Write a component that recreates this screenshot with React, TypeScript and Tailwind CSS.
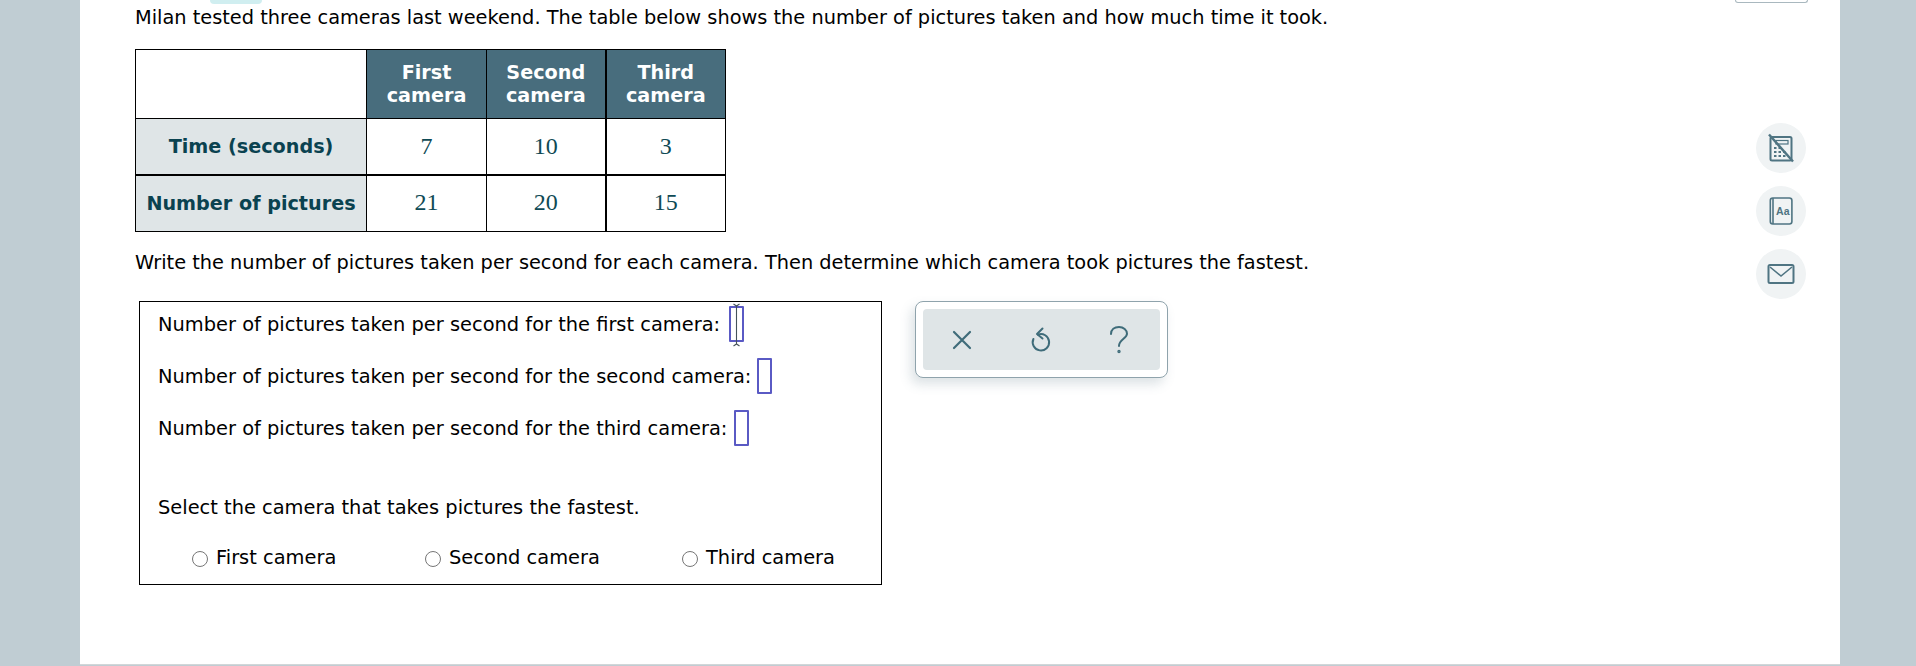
import React from "react";

const rows = [
  { label: "Time (seconds)", values: ["7", "10", "3"] },
  { label: "Number of pictures", values: ["21", "20", "15"] },
];

const answers = [
  { text: "Number of pictures taken per second for the first camera:", active: true, gap: "ml-[9px]" },
  { text: "Number of pictures taken per second for the second camera:", active: false, gap: "ml-[6px]" },
  { text: "Number of pictures taken per second for the third camera:", active: false, gap: "ml-[7px]" },
];

const choices = [
  { label: "First camera", cls: "w-[233px]" },
  { label: "Second camera", cls: "w-[257px]" },
  { label: "Third camera", cls: "" },
];

function CalculatorIcon() {
  return (
    <svg width="26" height="30" viewBox="0 0 26 30" fill="none" stroke="#4f7482">
      <rect x="2.5" y="4" width="21" height="23.5" rx="1.5" strokeWidth="2" />
      <rect x="8" y="7.5" width="12" height="3.5" strokeWidth="1.2" />
      <path d="M1 1.5 L25 28.5" strokeWidth="2.4" />
      <path d="M6 15h2.5M10.5 15h2.5M6 19h2.5M10.5 19h2.5M15 19h2.5M6 23h2.5M10.5 23h2.5M15 23h2.5" strokeWidth="2.2" />
    </svg>
  );
}

function GlossaryIcon() {
  return (
    <svg width="26" height="30" viewBox="0 0 26 30" fill="none" stroke="#4f7482" strokeWidth="1.6">
      <rect x="2.3" y="2" width="21.6" height="26" rx="2.5" />
      <path d="M5 2v26" />
      <text x="14.8" y="18.5" textAnchor="middle" fontSize="10.5" fontWeight="700" fill="#4f7482" stroke="none" fontFamily="'Liberation Sans', sans-serif">Aa</text>
    </svg>
  );
}

function MailIcon() {
  return (
    <svg width="28" height="22" viewBox="0 0 28 22" fill="none" stroke="#4f7482" strokeWidth="2">
      <rect x="1.5" y="2" width="25" height="18" rx="1.5" />
      <path d="M3 4 L14 13 L25 4" strokeWidth="1.6" />
    </svg>
  );
}

function SideButton({ children }: { children: React.ReactNode }) {
  return (
    <button className="flex h-[50px] w-[50px] items-center justify-center rounded-full bg-[#f0f3f4]">
      {children}
    </button>
  );
}

function AnswerInput({ active, gap }: { active: boolean; gap: string }) {
  return (
    <span className={`relative inline-block h-[36px] w-[15px] rounded-[1px] border-2 border-[#5a5ac4] ${gap}`}>
      {active && (
        <svg className="absolute -left-[2px] -top-[5px]" width="15" height="44" viewBox="0 0 15 44" fill="none" stroke="#45525a">
          <path d="M4.5 1 L7.5 3 L10.5 1 M7.5 3 V41 M4.5 43 L7.5 41 L10.5 43" strokeWidth="1.1" />
        </svg>
      )}
    </span>
  );
}

export default function App() {
  return (
    <div className="h-[666px] overflow-hidden bg-[#c0cdd3] pl-[80px] pr-[76px] font-['DejaVu_Sans',sans-serif] text-[19.35px] text-black">
      <div className="flex h-[665px] border-b border-[#d2d6d8] bg-white">
        <div className="w-[1655px] pl-[55px]">
          {/* clipped tab sitting above the scrolled question */}
          <div className="ml-[75px] h-[4px] w-[52px] rounded-b-[10px] bg-[#d0eef0]" />
          <p className="mt-[3px] h-[22px] whitespace-nowrap leading-[22px]">
            Milan tested three cameras last weekend. The table below shows the number of pictures taken and how much time it took.
          </p>

          <table className="mt-[20px] table-fixed border-collapse border border-black text-[19.2px] leading-[23px]">
            <thead>
              <tr className="h-[69px]">
                <th className="w-[231px] border border-black bg-white" />
                <th className="w-[120px] border border-black bg-[#486d7d] font-bold text-white">First<br />camera</th>
                <th className="w-[119px] border border-black border-r-2 bg-[#486d7d] font-bold text-white">Second<br />camera</th>
                <th className="w-[120px] border border-black bg-[#486d7d] font-bold text-white">Third<br />camera</th>
              </tr>
            </thead>
            <tbody>
              {rows.map((row, i) => (
                <tr key={row.label} className={i === 0 ? "h-[56px] border-b-2 border-black" : "h-[57px]"}>
                  <th className="whitespace-nowrap border border-black bg-[#dfe5e7] text-center font-bold text-[#0a4250]">{row.label}</th>
                  {row.values.map((value, j) => (
                    <td
                      key={j}
                      className={`border border-black text-center font-['Liberation_Serif',serif] text-[24px] text-[#0f4a55] ${j === 1 ? "border-r-2" : ""} ${i === 1 ? "pb-[2px]" : ""}`}
                    >
                      {value}
                    </td>
                  ))}
                </tr>
              ))}
            </tbody>
          </table>

          <p className="mt-[20px] h-[22px] whitespace-nowrap leading-[22px]">
            Write the number of pictures taken per second for each camera. Then determine which camera took pictures the fastest.
          </p>

          <div className="mt-[27px] flex items-start">
            <div className="ml-[4px] h-[284px] w-[743px] border border-black pl-[18px] text-[19.42px]">
              <div className="flex flex-col gap-[16px] pt-[4px]">
                {answers.map((a) => (
                  <div key={a.text} className="flex h-[36px] items-center">
                    <span className="whitespace-nowrap pt-[2px]">{a.text}</span>
                    <AnswerInput active={a.active} gap={a.gap} />
                  </div>
                ))}
              </div>
              <p className="mt-[51px] h-[22px] leading-[22px]">Select the camera that takes pictures the fastest.</p>
              <div className="mt-[28px] flex pl-[34px]">
                {choices.map((c) => (
                  <label key={c.label} className={`flex h-[22px] items-center whitespace-nowrap ${c.cls}`}>
                    <span className="mr-[8px] mt-[1px] h-[16px] w-[16px] rounded-full border border-[#767676] bg-white" />
                    {c.label}
                  </label>
                ))}
              </div>
            </div>

            <div className="ml-[33px] h-[77px] w-[253px] rounded-[8px] border border-[#8fa3ac] bg-white p-[7px] shadow-[-4px_6px_12px_rgba(80,110,125,0.2)]">
              <div className="flex h-[61px] items-center gap-[54.5px] rounded-[4px] bg-[#dfe5e7] pl-[27px]">
                <svg className="shrink-0" width="24" height="24" viewBox="0 0 24 24" fill="none" stroke="#3f6c7a" strokeWidth="2.2" strokeLinecap="round">
                  <path d="M4 4 L20 20 M20 4 L4 20" />
                </svg>
                <svg className="shrink-0" width="24" height="28" viewBox="0 0 24 28" fill="none" stroke="#3f6c7a" strokeWidth="2" strokeLinecap="round" strokeLinejoin="round">
                  <path d="M9 8.6 A8.2 8.2 0 1 1 4.4 13" />
                  <path d="M13.5 2.5 L8 8 L13.5 12.5" />
                </svg>
                <svg className="shrink-0" width="24" height="30" viewBox="0 0 24 30" fill="none" stroke="#3f6c7a" strokeWidth="2" strokeLinecap="round">
                  <path d="M4 9 C4 4.5 7.5 2 12 2 C16.5 2 20 5 20 8.8 C20 13.5 12 14.5 12 21" />
                  <circle cx="12" cy="26.5" r="0.7" />
                </svg>
              </div>
            </div>
          </div>
        </div>

        <div className="flex w-[105px] flex-col">
          <div className="h-[3px] w-[73px] rounded-b-[10px] border border-t-0 border-[#a9b8bf]" />
          <div className="ml-[21px] mt-[120px] flex flex-col gap-[13px]">
            <SideButton><CalculatorIcon /></SideButton>
            <SideButton><GlossaryIcon /></SideButton>
            <SideButton><MailIcon /></SideButton>
          </div>
        </div>
      </div>
    </div>
  );
}
